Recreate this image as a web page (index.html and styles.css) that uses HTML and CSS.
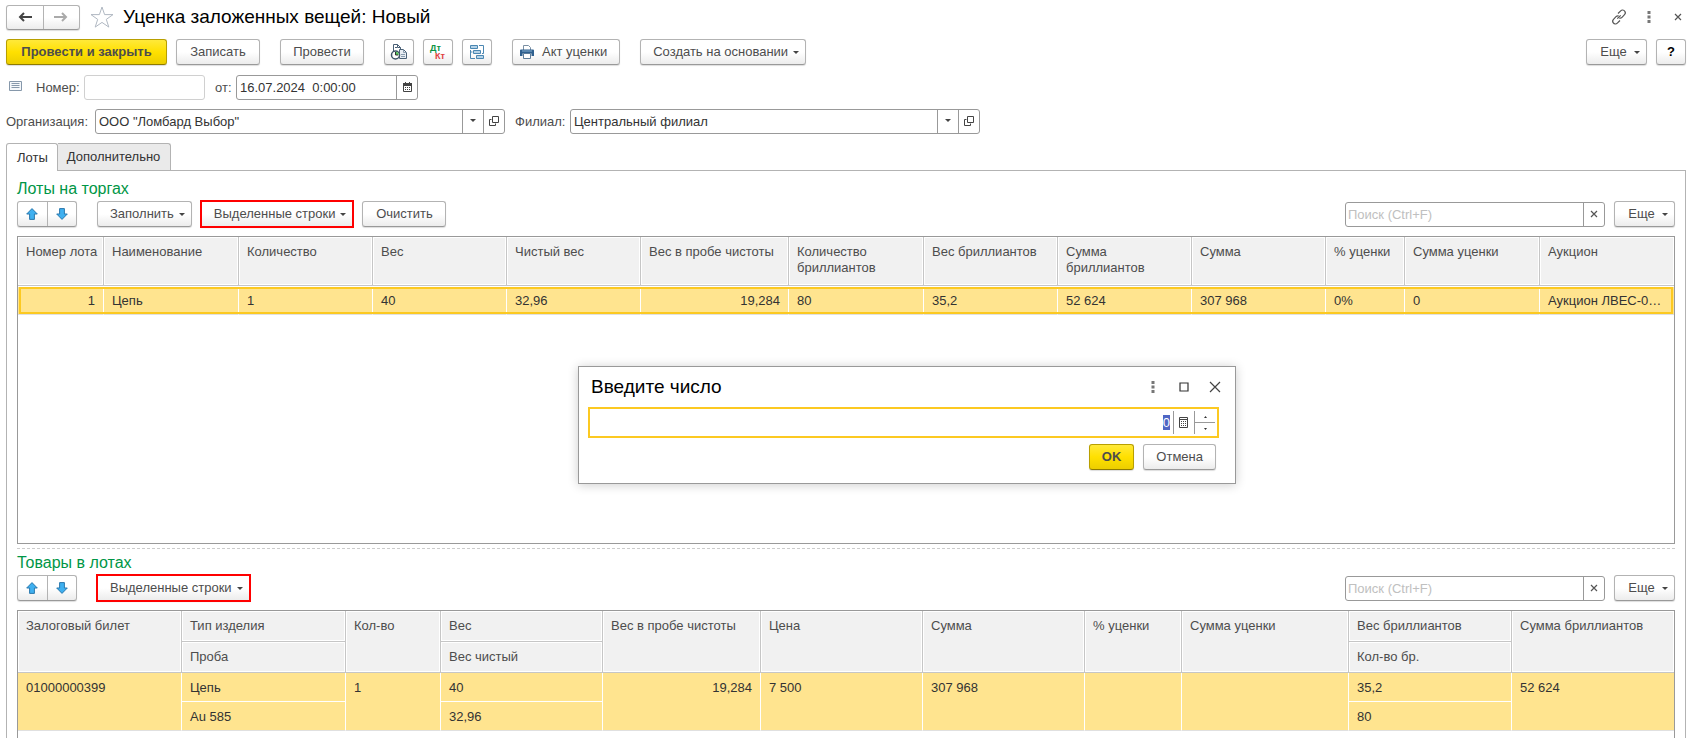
FILE: index.html
```html
<!DOCTYPE html>
<html lang="ru">
<head>
<meta charset="utf-8">
<title>Уценка заложенных вещей: Новый</title>
<link rel="stylesheet" href="styles.css">
</head>
<body>
<svg class="defs" aria-hidden="true">
  <symbol id="up" viewBox="0 0 12 12"><path d="M6 .6 11.3 6H8.4v5.4H3.6V6H.7z" fill="#3fb0f0" stroke="#2a78ad"/></symbol>
  <symbol id="down" viewBox="0 0 12 12"><path d="M6 11.4 11.3 6H8.4V.6H3.6V6H.7z" fill="#3fb0f0" stroke="#2a78ad"/></symbol>
  <symbol id="open" viewBox="0 0 10 10"><path d="M3.5.5h6v6h-6zM2.500 3.500h-2v6h6v-2" fill="none" stroke="#444"/></symbol>
  <symbol id="cross" viewBox="0 0 8 8"><path d="M1 1l6 6M7 1L1 7" fill="none" stroke="#555" stroke-width="1.200"/></symbol>
  <symbol id="dots" viewBox="0 0 4 12"><path d="M.5 0h3v3h-3zM.5 4.500h3v3h-3zM.5 9h3v3h-3z" fill="#777"/></symbol>
</svg>

<header class="titlebar">
  <div class="pair nav">
    <button type="button" aria-label="Назад"><svg width="14" height="10" viewBox="0 0 14 10"><path d="M14 5H3M6 1L2 5l4 4" fill="none" stroke="#444" stroke-width="2"/></svg></button>
    <button type="button" aria-label="Вперед"><svg width="14" height="10" viewBox="0 0 14 10"><path d="M0 5h11M8 1l4 4-4 4" fill="none" stroke="#aaa" stroke-width="2"/></svg></button>
  </div>
  <svg class="star" width="24" height="22" viewBox="0 0 24 22"><path d="M12 1l2.600 7.600h8.400l-6.700 4.800 2.500 7.700-6.800-4.700-6.800 4.700 2.500-7.700L1 8.600h8.400z" fill="#fff" stroke="#b0b8c2"/></svg>
  <h1>Уценка заложенных вещей: Новый</h1>
  <div class="window-icons">
    <button type="button" class="bare" aria-label="Ссылка"><svg width="16" height="16" viewBox="0 0 16 16"><g fill="none" stroke="#555" stroke-width="1.200"><path d="M7 4.500l2.700-2.700a2.600 2.600 0 0 1 4 .300c.9 1.200.8 2.600-.2 3.600L11 8.300c-.8.800-1.800 1-2.700.7"/><path d="M9 11.500l-2.700 2.700a2.600 2.600 0 0 1-4-.300c-.9-1.200-.8-2.600.2-3.600L5 7.700c.8-.8 1.800-1 2.700-.7"/><path d="M6.300 9.700l3.400-3.400"/></g></svg></button>
    <button type="button" class="bare" aria-label="Меню"><svg width="4" height="12"><use href="#dots"/></svg></button>
    <button type="button" class="bare" aria-label="Закрыть"><svg width="8" height="8"><use href="#cross"/></svg></button>
  </div>
</header>

<div class="toolbar commands">
  <div class="group">
    <button type="button" class="btn primary wide-btn">Провести и закрыть</button>
    <button type="button" class="btn mid-btn">Записать</button>
  </div>
  <button type="button" class="btn mid-btn">Провести</button>
  <div class="group">
    <button type="button" class="btn icon" aria-label="Отчеты"><svg width="18" height="18" viewBox="0 0 18 18"><path d="M3.500 1.500h4l3 3v8h-7z" fill="#fff" stroke="#4a6076"/><path d="M7.500 1.500v3h3M5 4.500h2" fill="none" stroke="#4a6076"/><path d="M9.500 6.500h4l3 3v6h-7z" fill="#e8edf3" stroke="#4a6076"/><path d="M13.500 6.500v3h3M11 11.500h4M11 13.500h4" fill="none" stroke="#8a9cae"/><circle cx="5.500" cy="12" r="4" fill="#fff" stroke="#3e5468" stroke-width="1.500"/><path d="M5.500 12V8.800A3.200 3.200 0 0 1 8.700 12z" fill="#55c65a"/><path d="M5.500 9v3h2.500" fill="none" stroke="#333"/></svg></button>
    <button type="button" class="btn icon" aria-label="Дебет и кредит"><svg width="18" height="18" viewBox="0 0 18 18" class="dtkt"><text x="1" y="8" fill="#0b9444">Дт</text><text x="6" y="16" fill="#e04040">Кт</text></svg></button>
    <button type="button" class="btn icon" aria-label="Структура"><svg width="16" height="16" viewBox="0 0 16 16"><g fill="#b5d3e8" stroke="#4b87b2"><path d="M1.500 1.500h7v3h-7zM4.500 6.500h7v3h-7zM7.500 11.500h7v3h-7z"/></g><path d="M10 1.500h4.500v8H13M1.500 6v8.500H6M1.500 8h2" fill="none" stroke="#4b87b2"/></svg></button>
  </div>
  <button type="button" class="btn print"><svg width="14" height="14" viewBox="0 0 14 14"><path d="M3.500 5V.5h5l2 2V5" fill="#fff" stroke="#7a8fa3"/><path d="M0 5.500Q0 4.500 1 4.500h12q1 0 1 1V11h-2.500V8.500h-9V11H0z" fill="#2f608f"/><path d="M2 6h10" stroke="#86aed0"/><path d="M3.500 8.500h7v5h-7z" fill="#fff" stroke="#5d7c99"/></svg>Акт уценки</button>
  <button type="button" class="btn drop">Создать на основании</button>
  <div class="group end">
    <button type="button" class="btn drop more">Еще</button>
    <button type="button" class="btn icon help">?</button>
  </div>
</div>

<div class="fields number-row">
  <svg class="list-icon" width="13" height="10" viewBox="0 0 13 10"><path d="M.5.500h12v9H.5z" fill="#f4f7fa" stroke="#8698ab"/><path d="M2.500 2.500h8M2.500 4.500h8M2.500 6.500h8" stroke="#8698ab" fill="none"/></svg>
  <label for="num">Номер:</label>
  <div class="box pale"><input id="num" type="text"></div>
  <label for="date" class="date-label">от:</label>
  <div class="box date"><input id="date" type="text" value="16.07.2024  0:00:00"><button type="button" aria-label="Календарь"><svg width="9" height="10" viewBox="0 0 9 10"><path d="M.5 2.500h8v7h-8z" fill="#fff" stroke="#444"/><path d="M0 1h9v3H0zM2 0h1v1H2zM6 0h1v1H6z" fill="#444"/><path d="M2 5.500h1m1 0h1m1 0h1M2 7.500h1m1 0h1m1 0h1" stroke="#444"/></svg></button></div>
</div>

<div class="fields">
  <label for="org" class="org-label">Организация:</label>
  <div class="box wide"><input id="org" type="text" value='ООО "Ломбард Выбор"'><button type="button" class="arrow" aria-label="Выбрать"></button><button type="button" aria-label="Открыть"><svg width="10" height="10"><use href="#open"/></svg></button></div>
  <label for="branch" class="branch-label">Филиал:</label>
  <div class="box wide"><input id="branch" type="text" value="Центральный филиал"><button type="button" class="arrow" aria-label="Выбрать"></button><button type="button" aria-label="Открыть"><svg width="10" height="10"><use href="#open"/></svg></button></div>
</div>

<div class="tabs" role="tablist">
  <button type="button" role="tab" class="tab active" aria-selected="true">Лоты</button>
  <button type="button" role="tab" class="tab">Дополнительно</button>
</div>

<main class="panel">
  <section class="lots">
    <h2>Лоты на торгах</h2>
    <div class="toolbar">
      <div class="pair move">
        <button type="button" aria-label="Вверх"><svg width="12" height="12"><use href="#up"/></svg></button>
        <button type="button" aria-label="Вниз"><svg width="12" height="12"><use href="#down"/></svg></button>
      </div>
      <div class="group">
        <button type="button" class="btn drop">Заполнить</button>
        <button type="button" class="btn drop marked">Выделенные строки</button>
        <button type="button" class="btn mid-btn">Очистить</button>
      </div>
      <div class="group end">
        <div class="box search"><input type="text" placeholder="Поиск (Ctrl+F)" aria-label="Поиск лотов"><button type="button" aria-label="Очистить поиск"><svg width="8" height="8"><use href="#cross"/></svg></button></div>
        <button type="button" class="btn drop more">Еще</button>
      </div>
    </div>
    <div class="grid">
      <table>
        <colgroup><col class="w86"><col class="w135"><col class="w134"><col class="w134"><col class="w134"><col class="w148"><col class="w135"><col class="w134"><col class="w134"><col class="w134"><col class="w79"><col class="w135"><col class="w134"></colgroup>
        <thead><tr><th>Номер лота</th><th>Наименование</th><th>Количество</th><th>Вес</th><th>Чистый вес</th><th>Вес в пробе чистоты</th><th>Количество бриллиантов</th><th>Вес бриллиантов</th><th>Сумма бриллиантов</th><th>Сумма</th><th>% уценки</th><th>Сумма уценки</th><th>Аукцион</th></tr></thead>
        <tbody><tr><td class="num">1</td><td>Цепь</td><td>1</td><td>40</td><td>32,96</td><td class="num">19,284</td><td>80</td><td>35,2</td><td>52 624</td><td>307 968</td><td>0%</td><td>0</td><td>Аукцион ЛВЕС-0…</td></tr></tbody>
      </table>
    </div>
  </section>

  <section class="goods">
    <h2>Товары в лотах</h2>
    <div class="toolbar">
      <div class="pair move">
        <button type="button" aria-label="Вверх"><svg width="12" height="12"><use href="#up"/></svg></button>
        <button type="button" aria-label="Вниз"><svg width="12" height="12"><use href="#down"/></svg></button>
      </div>
      <button type="button" class="btn drop marked">Выделенные строки</button>
      <div class="group end">
        <div class="box search"><input type="text" placeholder="Поиск (Ctrl+F)" aria-label="Поиск товаров"><button type="button" aria-label="Очистить поиск"><svg width="8" height="8"><use href="#cross"/></svg></button></div>
        <button type="button" class="btn drop more">Еще</button>
      </div>
    </div>
    <div class="grid">
      <table>
        <colgroup><col class="w164"><col class="w164"><col class="w95"><col class="w162"><col class="w158"><col class="w162"><col class="w162"><col class="w97"><col class="w167"><col class="w163"><col class="w162"></colgroup>
        <thead>
          <tr><th rowspan="2">Залоговый билет</th><th>Тип изделия</th><th rowspan="2">Кол-во</th><th>Вес</th><th rowspan="2">Вес в пробе чистоты</th><th rowspan="2">Цена</th><th rowspan="2">Сумма</th><th rowspan="2">% уценки</th><th rowspan="2">Сумма уценки</th><th>Вес бриллиантов</th><th rowspan="2">Сумма бриллиантов</th></tr>
          <tr><th>Проба</th><th>Вес чистый</th><th>Кол-во бр.</th></tr>
        </thead>
        <tbody>
          <tr><td rowspan="2">01000000399</td><td class="upper">Цепь</td><td rowspan="2">1</td><td class="upper">40</td><td rowspan="2" class="num">19,284</td><td rowspan="2">7 500</td><td rowspan="2">307 968</td><td rowspan="2"></td><td rowspan="2"></td><td class="upper">35,2</td><td rowspan="2">52 624</td></tr>
          <tr><td>Au 585</td><td>32,96</td><td>80</td></tr>
        </tbody>
      </table>
    </div>
  </section>
</main>

<div class="dialog" role="dialog" aria-labelledby="dialog-title">
  <div class="dialog-head">
    <h2 id="dialog-title">Введите число</h2>
    <button type="button" class="bare" aria-label="Меню"><svg width="4" height="12"><use href="#dots"/></svg></button>
    <button type="button" class="bare" aria-label="Развернуть"><svg width="10" height="10" viewBox="0 0 10 10"><path d="M1 1h8v8H1z" fill="none" stroke="#333" stroke-width="1.200"/></svg></button>
    <button type="button" class="bare" aria-label="Закрыть"><svg width="12" height="12" viewBox="0 0 12 12"><path d="M1 1l10 10M11 1L1 11" fill="none" stroke="#444" stroke-width="1.200"/></svg></button>
  </div>
  <div class="number">
    <div class="value" role="textbox" contenteditable="true" aria-labelledby="dialog-title"><mark>0</mark></div>
    <button type="button" class="calc" aria-label="Калькулятор"><svg width="9" height="11" viewBox="0 0 9 11"><path d="M.5.500h8v10h-8z" fill="#fff" stroke="#444"/><path d="M0 2.500h9" stroke="#444"/><path d="M2 4.500h1m1 0h1m1 0h1M2 6.500h1m1 0h1m1 0h1M2 8.500h1m1 0h1m1 0h1" stroke="#444"/></svg></button>
    <div class="spin"><button type="button" aria-label="Больше"><svg width="3" height="2" viewBox="0 0 3 2"><path d="M0 2h3L1.500 0z" fill="#333"/></svg></button><button type="button" aria-label="Меньше"><svg width="3" height="2" viewBox="0 0 3 2"><path d="M0 0h3L1.500 2z" fill="#333"/></svg></button></div>
  </div>
  <div class="actions">
    <button type="button" class="btn primary">OK</button>
    <button type="button" class="btn">Отмена</button>
  </div>
</div>
</body>
</html>
```
FILE: styles.css
```css
* { box-sizing: border-box; }

body {
  margin: 0;
  padding: 5px 10px 0 6px;
  height: 100vh;
  overflow: hidden;
  display: flex;
  flex-direction: column;
  position: relative;
  background: #fff;
  color: #333;
  font: 13px/16px "Liberation Sans", Arial, sans-serif;
}

button, input { font: inherit; color: inherit; }
h1, h2 { margin: 0; font-weight: 400; }
.defs { position: absolute; width: 0; height: 0; }

/* Title */
.titlebar { display: flex; align-items: center; height: 24px; }
.titlebar h1 { margin-left: 9px; font-size: 19px; line-height: 24px; color: #000; }
.star { margin-left: 10px; }
.window-icons { margin-left: auto; display: flex; align-items: center; gap: 20px; }
.bare { display: flex; padding: 0; border: 0; background: none; }
.window-icons .bare:last-child { padding: 0 4px 0 3px; }

/* Buttons */
.pair, .btn {
  border: 1px solid #b3b3b3;
  border-bottom-color: #999;
  border-radius: 3px;
  background: linear-gradient(#fff 50%, #ececec);
  box-shadow: 0 1px 1px #ddd;
}
.pair { display: flex; }
.pair button {
  display: flex;
  align-items: center;
  justify-content: center;
  flex: 1;
  padding: 0;
  border: 0;
  background: none;
}
.pair button + button { border-left: 1px solid #b3b3b3; }
.nav { width: 74px; height: 25px; }
.move { width: 60px; height: 26px; }

.btn {
  display: flex;
  align-items: center;
  justify-content: center;
  height: 26px;
  padding: 0 12px;
  color: #4d4d4d;
  white-space: nowrap;
}
.primary {
  border-color: #b89f00;
  border-bottom-color: #8f7b00;
  background: linear-gradient(#ffe93a, #ffe000 50%, #ecce00);
  font-weight: 700;
}
.wide-btn { min-width: 161px; }
.mid-btn { min-width: 84px; }
.icon { width: 30px; padding: 0; }
.help { color: #000; font-weight: 700; }
.print { padding: 0 12px 0 7px; gap: 8px; }
.drop { padding: 0 6px 0 12px; gap: 5px; }
.drop::after, .arrow::after {
  content: "";
  border: solid transparent;
  border-width: 3px 3px 0;
  border-top-color: #444;
}
.more { min-width: 61px; padding-left: 13px; gap: 7px; }
.marked { border-radius: 0; outline: 2px solid #f00; outline-offset: -1px; }
.dtkt text { font: 700 9px "Liberation Sans", Arial, sans-serif; }

.toolbar { display: flex; gap: 20px; }
.commands { margin: 10px 0; }
.group { display: flex; gap: 9px; }
.end { margin-left: auto; }

/* Fields */
.fields { display: flex; align-items: center; margin-bottom: 9px; color: #4d4d4d; }
.box {
  display: flex;
  height: 25px;
  border: 1px solid #999;
  border-radius: 3px;
  background: #fff;
  color: #333;
}
.box input {
  flex: 1;
  min-width: 0;
  padding: 0 3px;
  border: 0;
  background: none;
  outline: 0;
  white-space: pre;
}
.box button {
  display: flex;
  align-items: center;
  justify-content: center;
  width: 21px;
  padding: 0 0 2px;
  border: 0;
  border-left: 1px solid #999;
  background: none;
}
.list-icon { margin: 0 14px 4px 3px; }
.number-row label { width: 48px; }
.number-row .date-label { width: 31px; padding-left: 10px; }
.pale { width: 121px; border-color: #d0d0d0; }
.date { width: 182px; }
.wide { width: 410px; }
.org-label { width: 89px; }
.branch-label { width: 65px; padding-left: 10px; }
.search { width: 260px; }
.search input { padding: 0 2px; }
.search input::placeholder { color: #c0c0c0; }
.toolbar .search { margin-top: 1px; }

/* Tabs */
.tabs { display: flex; }
.tab {
  height: 27px;
  padding: 0 10px 0 9px;
  border: 1px solid #b3b3b3;
  border-width: 1px 1px 0 0;
  border-radius: 0 3px 0 0;
  background: #eaeaea;
}
.tab.active {
  height: 28px;
  margin-bottom: -1px;
  padding: 0 9px 0 10px;
  border-left-width: 1px;
  border-radius: 3px 3px 0 0;
  background: #fff;
  z-index: 1;
}

.panel {
  flex: 1;
  min-height: 0;
  display: flex;
  flex-direction: column;
  padding: 9px 10px 0;
  border: 1px solid #b3b3b3;
  border-bottom: 0;
}
.panel h2 { font-size: 16px; line-height: 18px; color: #009646; }
.panel .toolbar { margin: 3px 0 9px; }

/* Tables */
.grid { border: 1px solid #999; }
.lots .grid { height: 308px; }
.lots { padding-bottom: 4px; border-bottom: 1px dashed #ccc; }
.goods { flex: 1; display: flex; flex-direction: column; padding-top: 5px; }
.goods .grid { flex: 1; border-bottom: 0; }
table { width: 100%; table-layout: fixed; border-collapse: separate; border-spacing: 0; }
th, td {
  padding: 7px 8px 5px;
  text-align: left;
  vertical-align: top;
  font-weight: 400;
}
th {
  padding-right: 4px;
  border-right: 1px solid #c6c6c6;
  border-bottom: 1px solid #c6c6c6;
  background: #f1f1f1;
  box-shadow: inset 0 0 0 1px #fff;
  color: #4d4d4d;
}
td {
  border-right: 1px solid #fff;
  border-bottom: 1px solid #e0e0e0;
  background: #ffe48f;
  color: #333;
  white-space: nowrap;
}
th:last-child, td:last-child { border-right: 0; }
.goods tr + tr th:last-child { border-right: 1px solid #c6c6c6; }
.goods tr + tr td:last-child { border-right: 1px solid #fff; }
.num { text-align: right; }
.goods .upper { border-bottom-color: #fff; }
.lots th { height: 49px; }
.lots td { height: 29px; padding: 6px 8px 5px; border-top: 1px solid #fff; }
.lots tbody tr { outline: 2px solid #fcc921; outline-offset: -3px; }
.goods th { height: 31px; }
.goods td { height: 29px; }

.w79 { width: 79px; }
.w86 { width: 86px; }
.w95 { width: 95px; }
.w97 { width: 97px; }
.w134 { width: 134px; }
.w135 { width: 135px; }
.w148 { width: 148px; }
.w158 { width: 158px; }
.w162 { width: 162px; }
.w163 { width: 163px; }
.w164 { width: 164px; }
.w167 { width: 167px; }

/* Dialog */
.dialog {
  position: absolute;
  left: 578px;
  top: 366px;
  width: 658px;
  padding: 8px 16px 13px 9px;
  border: 1px solid #999;
  background: #fff;
  box-shadow: 0 1px 10px rgba(0, 0, 0, 0.2);
}
.dialog-head { display: flex; align-items: center; gap: 25px; padding-left: 3px; }
.dialog-head h2 { flex: 1; font-size: 19px; line-height: 24px; color: #000; }
.dialog-head .bare:last-child { margin: 0 -2px 0 -5px; }
.dialog-head .bare:nth-child(3) { margin-left: -1px; }
.number {
  display: flex;
  align-items: stretch;
  height: 31px;
  margin-top: 8px;
  padding: 2px;
  border: 2px solid #fcc921;
}
.value { flex: 1; padding: 4px 3px 0 0; text-align: right; outline: 0; }
.value mark { background: #4f66c4; color: #fff; }
.calc {
  display: flex;
  align-items: center;
  justify-content: center;
  width: 21px;
  padding: 0 2px 0 0;
  border: 0;
  border-left: 1px solid #999;
  background: none;
}
.spin { display: flex; flex-direction: column; width: 21px; border-left: 1px solid #999; }
.spin button {
  flex: 1;
  display: flex;
  align-items: center;
  justify-content: center;
  padding: 0;
  border: 0;
  background: none;
}
.spin button + button { border-top: 1px solid #999; }
.actions { display: flex; justify-content: flex-end; gap: 9px; padding: 6px 3px 0 0; }
```
